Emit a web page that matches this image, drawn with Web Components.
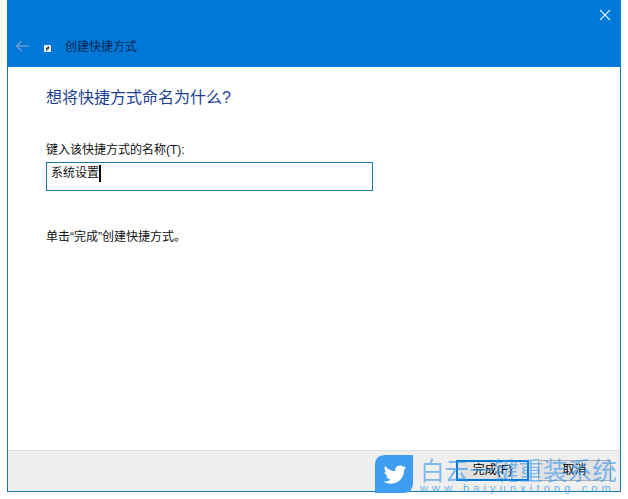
<!DOCTYPE html>
<html lang="zh"><head><meta charset="utf-8"><style>
html,body{margin:0;padding:0;background:#fff;height:499px;overflow:hidden}
body{font-family:"Liberation Sans","Noto Sans CJK SC",sans-serif;font-size:12px;color:#000}
</style></head><body>
<wizard-window>
<wizard-title slot="title" label="创建快捷方式"></wizard-title>
<h-text slot="body">想将快捷方式命名为什么?</h-text>
<name-field slot="body" label="键入该快捷方式的名称(T):" value="系统设置"></name-field>
<p-text slot="body">单击“完成”创建快捷方式。</p-text>
<wiz-button slot="footer" primary label="完成(F)"></wiz-button>
<wiz-button slot="footer" label="取消"></wiz-button>
</wizard-window>
<brand-mark></brand-mark>
<script>
const def=(n,html,init)=>customElements.define(n,class extends HTMLElement{
 constructor(){super();this.attachShadow({mode:'open'}).innerHTML=html;}
 connectedCallback(){init&&init(this,this.shadowRoot);}
});
def('wizard-window',`<style>
:host{display:flex;flex-direction:column;box-sizing:border-box;width:614px;height:492px;margin-left:7px;border:solid #1a77ab;border-width:0 1px 1px 1px;background:#fff}
.t{flex:none}.b{flex:1;display:flex;flex-direction:column;padding:20px 38px 0}
.f{flex:none;height:41px;box-sizing:border-box;background:#efefef;border-top:1px solid #dfdfdf;display:flex;justify-content:flex-end;align-items:flex-start;gap:9px;padding:9px 9px 0 0}
</style><div class="t"><slot name="title"></slot></div><div class="b"><slot name="body"></slot></div><div class="f"><slot name="footer"></slot></div>`);
def('wizard-title',`<style>
:host{display:block;height:67px;background:#0078d7;margin:0 -1px;position:relative}
.x{position:absolute;right:10px;top:9px;width:12px;height:12px}
.row{display:flex;align-items:center;height:20px;padding:37px 0 0 8px}
.ic{display:block;margin:3px 0 0 15px;width:7px;height:7px}
span{font-size:12px;color:#06264e;margin-left:14px;line-height:20px}
</style><svg class="x" viewBox="0 0 12 12"><path d="M1 1l10 10M11 1L1 11" stroke="#d8ecfb" stroke-width="1.2" fill="none"/></svg>
<div class="row"><svg width="14" height="12" viewBox="0 0 14 12" style="margin-top:-2px"><path d="M13.500 6H1.500M6.500 1L1.500 6l5 5" stroke="#6c9ccb" stroke-width="1.600" fill="none"/></svg>
<svg class="ic" viewBox="0 0 8 8"><rect width="8" height="8" fill="#e8eef4"/><path d="M3 6.500V4h2.500M3 4l3-2" stroke="#223" stroke-width="1.200" fill="none"/></svg><span id="l"></span></div>`,(h,s)=>s.getElementById('l').textContent=h.getAttribute('label'));
def('h-text',`<style>:host{display:block;font-size:16px;line-height:22px;color:#1d3f94}</style><slot></slot>`);
def('name-field',`<style>
:host{display:block;margin-top:33px}
label{display:block;font-size:12px;line-height:16px;color:#111}
.i{box-sizing:border-box;width:327px;height:29px;margin-top:4px;border:1px solid #1a77ab;padding:2px 0 0 4px;font-size:12px;line-height:17px;color:#111;display:flex;align-items:flex-start}
.c{display:block;width:2px;height:17px;background:#000}
</style><label id="l"></label><div class="i"><span id="v"></span><i class="c"></i></div>`,(h,s)=>{s.getElementById('l').textContent=h.getAttribute('label');s.getElementById('v').textContent=h.getAttribute('value');});
def('p-text',`<style>:host{display:block;font-size:12px;line-height:16px;color:#111;margin-top:38px}</style><slot></slot>`);
def('wiz-button',`<style>
:host{display:block;box-sizing:border-box;width:73px;height:21px;border:1px solid #adadad;background:#e1e1e1;font-size:12px;line-height:19px;text-align:center;color:#000}
:host([primary]){border:2px solid #0078d7;line-height:17px}
</style><span id="l"></span>`,(h,s)=>s.getElementById('l').textContent=h.getAttribute('label'));
def('brand-mark',`<style>
:host{display:block;position:absolute;left:375px;top:455px;width:244px;height:38px;pointer-events:none}
svg{position:absolute;left:0;top:0}
.a{position:absolute;left:45px;top:-3px;font:400 24.6px/34px "Noto Sans CJK SC",sans-serif;color:rgba(50,150,238,.62);white-space:nowrap}
.b{position:absolute;left:45px;top:27px;font:400 11px/13px "Liberation Sans",sans-serif;color:rgba(50,150,238,.75);letter-spacing:4.150px;white-space:nowrap}
</style><svg width="38" height="38" viewBox="0 0 38 38"><path d="M10 0H38V28Q38 38 28 38H0V10Q0 0 10 0Z" fill="#3d9df0"/>
<g transform="translate(3.300 2.700) scale(.9)"><path d="M31 10.500l-2.600.5 1.800-2-2.500 1a5.400 5.400 0 0 0-8.900 5c-4.600-.2-8.500-2.300-11.200-5.700-1.300 2.500-.7 5.400 1.500 7l-2.200-.6c.1 2.500 1.800 4.300 4.200 4.900l-2.300.1c.7 2 2.500 3.300 4.800 3.500-2.200 1.700-4.900 2.500-7.800 2.200 8 5 20 2.500 22.600-9.600.2-1 .3-2 .2-3z" fill="#fff"/></g></svg>
<div class="a">白云一键重装系统</div><div class="b">www.baiyunxitong.com</div>`);
</script></body></html>
